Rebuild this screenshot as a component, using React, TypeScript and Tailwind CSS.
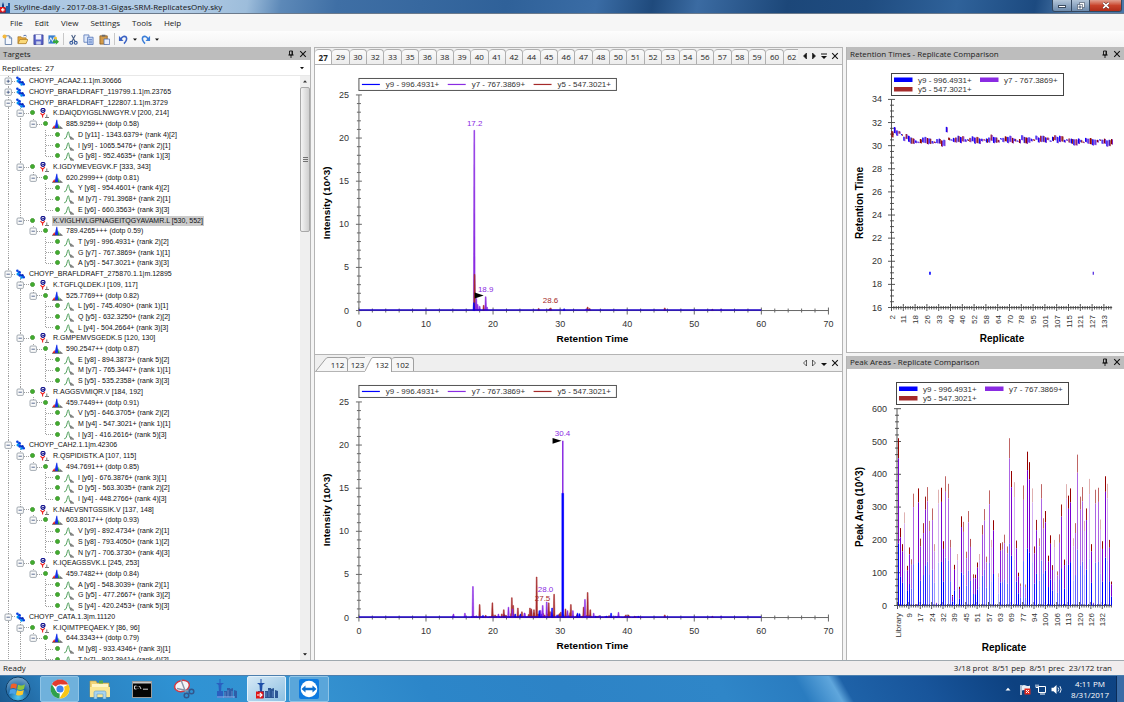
import { useState } from "react";
import type { ReactNode } from "react";
import clsx from "clsx";

const BLUE = "#0000ff";
const PURPLE = "#8a2be2";
const BROWN = "#a52a2a";

type Peptide = { seq: string; precursor: string; transitions: string[] };
type Protein = { name: string; peptides: Peptide[]; more?: boolean };

const proteins: Protein[] = [
  { name: "CHOYP_ACAA2.1.1|m.30666", peptides: [] },
  { name: "CHOYP_BRAFLDRAFT_119799.1.1|m.23765", peptides: [] },
  {
    name: "CHOYP_BRAFLDRAFT_122807.1.1|m.3729",
    peptides: [
      {
        seq: "K.DAIQDYIGSLNWGYR.V [200, 214]",
        precursor: "885.9259++ (dotp 0.58)",
        transitions: ["D [y11] - 1343.6379+ (rank 4)[2]", "I [y9] - 1065.5476+ (rank 2)[1]", "G [y8] - 952.4635+ (rank 1)[3]"],
      },
      {
        seq: "K.IGDYMEVEGVK.F [333, 343]",
        precursor: "620.2999++ (dotp 0.81)",
        transitions: ["Y [y8] - 954.4601+ (rank 4)[2]", "M [y7] - 791.3968+ (rank 2)[1]", "E [y6] - 660.3563+ (rank 3)[3]"],
      },
      {
        seq: "K.VIGLHVLGPNAGEITQGYAVAMR.L [530, 552]",
        precursor: "789.4265+++ (dotp 0.59)",
        transitions: ["T [y9] - 996.4931+ (rank 2)[2]", "G [y7] - 767.3869+ (rank 1)[1]", "A [y5] - 547.3021+ (rank 3)[3]"],
      },
    ],
  },
  {
    name: "CHOYP_BRAFLDRAFT_275870.1.1|m.12895",
    peptides: [
      {
        seq: "K.TGFLQLDEK.I [109, 117]",
        precursor: "525.7769++ (dotp 0.82)",
        transitions: ["L [y6] - 745.4090+ (rank 1)[1]", "Q [y5] - 632.3250+ (rank 2)[2]", "L [y4] - 504.2664+ (rank 3)[3]"],
      },
      {
        seq: "R.GMPEMVSGEDK.S [120, 130]",
        precursor: "590.2547++ (dotp 0.87)",
        transitions: ["E [y8] - 894.3873+ (rank 5)[2]", "M [y7] - 765.3447+ (rank 1)[1]", "S [y5] - 535.2358+ (rank 3)[3]"],
      },
      {
        seq: "R.AGGSVMIQR.V [184, 192]",
        precursor: "459.7449++ (dotp 0.91)",
        transitions: ["V [y5] - 646.3705+ (rank 2)[2]", "M [y4] - 547.3021+ (rank 1)[1]", "I [y3] - 416.2616+ (rank 5)[3]"],
      },
    ],
  },
  {
    name: "CHOYP_CAH2.1.1|m.42306",
    peptides: [
      {
        seq: "R.QSPIDISTK.A [107, 115]",
        precursor: "494.7691++ (dotp 0.85)",
        transitions: ["I [y6] - 676.3876+ (rank 3)[1]", "D [y5] - 563.3035+ (rank 2)[2]", "I [y4] - 448.2766+ (rank 4)[3]"],
      },
      {
        seq: "K.NAEVSNTGSSIK.V [137, 148]",
        precursor: "603.8017++ (dotp 0.93)",
        transitions: ["V [y9] - 892.4734+ (rank 2)[1]", "S [y8] - 793.4050+ (rank 1)[2]", "N [y7] - 706.3730+ (rank 4)[3]"],
      },
      {
        seq: "K.IQEAGSSVK.L [245, 253]",
        precursor: "459.7482++ (dotp 0.84)",
        transitions: ["A [y6] - 548.3039+ (rank 2)[1]", "G [y5] - 477.2667+ (rank 3)[2]", "S [y4] - 420.2453+ (rank 5)[3]"],
      },
    ],
  },
  {
    name: "CHOYP_CATA.1.3|m.11120",
    more: true,
    peptides: [
      {
        seq: "K.IQIMTPEQAEK.Y [86, 96]",
        precursor: "644.3343++ (dotp 0.79)",
        transitions: ["M [y8] - 933.4346+ (rank 3)[1]", "T [y7] - 802.3941+ (rank 4)[2]"],
      },
    ],
  },
];

type Row = { level: number; label: string; expanded: boolean; last: boolean; siblings: boolean };

const rows: Row[] = proteins.flatMap((protein) => [
  { level: 0, label: protein.name, expanded: protein.peptides.length > 0, last: false, siblings: false },
  ...protein.peptides.flatMap((pep, i) => {
    const last = i === protein.peptides.length - 1 && !protein.more;
    return [
      { level: 1, label: pep.seq, expanded: true, last, siblings: !last },
      { level: 2, label: pep.precursor, expanded: true, last: true, siblings: !last },
      ...pep.transitions.map((label, t) => ({
        level: 3,
        label,
        expanded: false,
        last: t === pep.transitions.length - 1 && !protein.more,
        siblings: !last,
      })),
    ];
  }),
]);

const rowPadding = ["pl-[4px]", "pl-[16px]", "pl-[29px]", "pl-[55px]"];

function TreeLines({ row }: { row: Row }) {
  const line = { stroke: "#a0a0a0", strokeDasharray: "1 1" };
  const { level } = row;
  return (
    <svg className="absolute left-0 top-0 h-full w-[60px] overflow-visible" aria-hidden="true">
      <line x1="8.5" x2="8.5" y1="0" y2="11" {...line} />
      {level === 0 && <line x1="12" x2="16" y1="5.5" y2="5.5" {...line} />}
      {level === 0 && row.expanded && <line x1="20.5" x2="20.5" y1="9" y2="11" {...line} />}
      {level > 0 && (level === 1 || row.siblings) && (
        <line x1="20.5" x2="20.5" y1="0" y2={level === 1 && row.last ? 5 : 11} {...line} />
      )}
      {level === 1 && <line x1="24" x2="29" y1="5.5" y2="5.5" {...line} />}
      {level === 2 && <line x1="33.5" x2="33.5" y1="0" y2="5" {...line} />}
      {level === 2 && <line x1="37" x2="42" y1="5.5" y2="5.5" {...line} />}
      {level === 3 && <line x1="45.5" x2="45.5" y1="0" y2={row.last ? 5 : 11} {...line} />}
      {level === 3 && <line x1="46" x2="54" y1="5.5" y2="5.5" {...line} />}
    </svg>
  );
}

function Expander({ expanded, label }: { expanded: boolean; label: string }) {
  return (
    <button type="button" aria-label={`Toggle ${label}`} className="relative size-2 shrink-0">
      <svg viewBox="0 0 8 8" className="size-2">
        <rect x="1" y="1" width="6.4" height="6.4" rx="1" fill="#fbfbfb" stroke="#8c96a0" strokeWidth=".8" />
        <path d={expanded ? "M2.5 4.2h3.4" : "M2.5 4.2h3.4M4.2 2.5v3.4"} stroke="#334a78" strokeWidth=".8" />
      </svg>
    </button>
  );
}

function NodeIcon({ level }: { level: number }) {
  return (
    <svg viewBox="0 0 11 10" className="relative ml-[3px] h-[10px] w-[11px] shrink-0">
      {level === 0 && (
        <g fill="#0a3fe0">
          <circle cx="2.4" cy="1.8" r="1.3" />
          <circle cx="4.4" cy="3.2" r="1.5" />
          <circle cx="3" cy="5" r="1.5" fill="#0092f0" />
          <circle cx="5" cy="6.2" r="1.6" />
          <circle cx="7.4" cy="6.6" r="1.5" fill="#0a28b8" />
          <circle cx="6.6" cy="8.4" r="1.3" fill="#0092f0" />
          <circle cx="8.8" cy="8.2" r="1.2" />
        </g>
      )}
      {level === 1 && (
        <g fill="none">
          <circle cx="4" cy="2.3" r="2" fill="#fff" stroke="#10108c" strokeWidth="1.2" />
          <path d="M3.2 2.4h2.4" stroke="#10108c" />
          <path d="M1.5 5.2 3.6 7.3M5.8 5.2 3.6 7.3V9.6" stroke="#ee2020" strokeWidth="1.1" />
          <path d="M6 9.5H7.8V6.5M7.8 9.5H10" stroke="#666" strokeWidth=".9" />
        </g>
      )}
      {level === 2 && (
        <g>
          <path d="M2.6 9.2 4.4.8h.8l1.200 8.400z" fill="#1430e8" />
          <path d="M.3 9.200 2.400 6l1 3.200z" fill="#e02020" />
          <path d="M5.800 9.200 6.800 4.600l1 4.600z" fill="#1b9a2b" />
          <path d="M7.800 9.300V6.800l2.800 2.500z" fill="#777" />
          <path d="M0 9.400h10.600" stroke="#555" strokeWidth=".7" />
        </g>
      )}
      {level === 3 && (
        <g fill="none">
          <path d="M.2 8.8C2.4 8.8 2.6 6 3.4 3.4 4 1 4.6 1.4 5 3.6c.4 2.4.6 4.4 2 4.8" stroke="#3b9348" strokeWidth=".9" />
          <path d="M6.600 9.200V6.600L9.800 9.200z" fill="#999" stroke="#666" strokeWidth=".7" />
        </g>
      )}
    </svg>
  );
}

function TreeRow({ row, selected }: { row: Row; selected: boolean }) {
  return (
    <li className={clsx("relative flex min-h-0 items-center", rowPadding[row.level])}>
      <TreeLines row={row} />
      {row.level < 3 && <Expander expanded={row.expanded} label={row.label} />}
      {row.level > 0 && (
        <span className={clsx("relative flex size-[6px] shrink-0", row.level < 3 && "ml-[6px]")}>
          <span className="size-[5px] rounded-full border border-[#4a9a3a] bg-[#3fae2c]" />
        </span>
      )}
      <NodeIcon level={row.level} />
      <span
        className={clsx(
          "ml-[2px] whitespace-pre px-px font-['Liberation_Sans',Arial,sans-serif] text-[7px] leading-[10px] text-[#111]",
          selected && "bg-[#cbcbcb]",
        )}
      >
        {row.label}
      </span>
    </li>
  );
}

function PinIcon() {
  return (
    <svg viewBox="0 0 8 8" className="size-2" fill="none" stroke="#111" strokeWidth=".9">
      <path d="M2.5 1h3v4h-3zM1.3 5h5.4M4 5v3M5 1v4" />
    </svg>
  );
}

function CloseIcon() {
  return (
    <svg viewBox="0 0 8 8" className="size-2" stroke="#111" strokeWidth="1.1">
      <path d="M1.2 1.2 6.8 6.8M6.8 1.2 1.2 6.8" />
    </svg>
  );
}

function PanelHeader({ title }: { title: string }) {
  return (
    <header className="flex h-[13px] shrink-0 items-center bg-[#bdbdbd] pl-[3px] pr-[3px]">
      <h2 className="flex-1 whitespace-nowrap text-[8px] leading-[12px] text-[#1c1c1c]">{title}</h2>
      <button type="button" aria-label="Auto hide">
        <PinIcon />
      </button>
      <button type="button" aria-label="Close" className="ml-1">
        <CloseIcon />
      </button>
    </header>
  );
}

function TargetsPanel() {
  return (
    <section className="flex min-h-0 flex-col border-r border-[#b4b4b4] bg-white">
      <PanelHeader title="Targets" />
      <div className="flex h-[15px] shrink-0 items-center pl-[2px] text-[8px]">
        <label htmlFor="replicates">Replicates:</label>
        <select id="replicates" defaultValue="27" className="ml-[3px] flex-1 appearance-none bg-transparent leading-[12px]">
          <option>27</option>
          <option>29</option>
          <option>30</option>
        </select>
        <svg viewBox="0 0 6 4" className="mr-[5px] h-1 w-[6px]">
          <path d="M1 1h4L3 3.2z" fill="#111" />
        </svg>
      </div>
      <div className="flex min-h-0 flex-1 overflow-hidden border-t border-[#e8e8e8]">
        <ul className="-mb-[5px] grid flex-1 auto-rows-fr overflow-hidden">
          {rows.map((row) => (
            <TreeRow key={row.label + row.level} row={row} selected={row.label.startsWith("K.VIGL")} />
          ))}
        </ul>
        <div className="flex w-[10px] flex-col items-center bg-[#efefef]">
          <svg viewBox="0 0 10 11" className="h-[11px] w-[10px]">
            <path d="M3 6.5h4L5 4.2z" fill="#333" />
          </svg>
          <div className="flex h-[145px] w-full items-center justify-center rounded-[2px] border border-[#a8a8a8] bg-linear-to-r from-[#f4f4f4] to-[#cfcfcf]">
            <svg viewBox="0 0 5 5" className="size-[5px]" stroke="#555" strokeWidth=".8">
              <path d="M0 .5h5M0 2.5h5M0 4.5h5" />
            </svg>
          </div>
          <svg viewBox="0 0 10 11" className="mt-auto h-[11px] w-[10px]">
            <path d="M3 4.2h4L5 6.5z" fill="#111" />
          </svg>
        </div>
      </div>
    </section>
  );
}

type Peak = [time: number, height: number, color: string];
type Note = { x: number; y: number; text: string; color: string };

const legend = [
  ["y9 - 996.4931+", BLUE],
  ["y7 - 767.3869+", PURPLE],
  ["y5 - 547.3021+", BROWN],
];

const baseNoise: Peak[] = [
  [33.9, 0.2, PURPLE],
  [45.6, 0.3, BROWN],
  [52.7, 0.15, BROWN],
  [54, 0.15, PURPLE],
];

const replicate27: Peak[] = [
  [17.2, 20.9, PURPLE],
  [17.25, 4.2, BROWN],
  [17.15, 0.9, BLUE],
  [17.5, 1.4, PURPLE],
  [17.7, 0.7, PURPLE],
  [18, 0.5, PURPLE],
  [18.6, 0.6, BROWN],
  [18.9, 1.6, PURPLE],
  [19.1, 0.4, PURPLE],
  [26.8, 0.25, BROWN],
  [28.4, 0.2, BROWN],
  [28.6, 0.3, BROWN],
  [30.6, 0.2, BLUE],
  [34.1, 0.4, BROWN],
  [34.4, 0.25, BROWN],
  ...baseNoise,
];

// low background between 16 and 44 minutes
const background: Peak[] = Array.from({ length: 130 }, (_, i) => {
  const time = 16.5 + i * 0.2;
  const envelope = 0.2 + 0.65 * Math.exp(-(((time - 27) / 6) ** 2));
  return [time, envelope * Math.abs(Math.sin(i * 2.7) * Math.cos(i * 1.3)), [BROWN, PURPLE, BLUE, BROWN][i % 4]];
});

const replicate132: Peak[] = [
  ...background,
  [14.1, 0.4, PURPLE],
  [15.8, 0.5, PURPLE],
  [17, 3.6, PURPLE],
  [18, 1.5, BROWN],
  [19.9, 1.7, BROWN],
  [20.8, 0.4, PURPLE],
  [21.6, 0.9, BROWN],
  [22.3, 1.2, PURPLE],
  [22.8, 2.3, BROWN],
  [23, 1.4, BROWN],
  [22.9, 1, PURPLE],
  [23.7, 1.1, BROWN],
  [24.7, 0.5, PURPLE],
  [25.5, 1.1, BROWN],
  [25.7, 1, BROWN],
  [26.1, 0.9, BROWN],
  [26.5, 4.7, BROWN],
  [26.9, 0.8, BLUE],
  [27.4, 1.4, PURPLE],
  [28, 1.8, PURPLE],
  [28.3, 1.7, BROWN],
  [28.8, 1.1, BLUE],
  [29.1, 2.7, BROWN],
  [30.8, 1, BROWN],
  [31.1, 0.8, PURPLE],
  [31.6, 1.5, BROWN],
  [31.9, 0.8, PURPLE],
  [32.6, 0.5, BLUE],
  [33.5, 1.2, BROWN],
  [33.7, 2.1, PURPLE],
  [34.1, 2.9, BROWN],
  [34.5, 0.9, BROWN],
  [35, 0.5, PURPLE],
  [37.6, 0.5, BLUE],
  [38.7, 0.6, PURPLE],
  [39.8, 0.3, BROWN],
  [40.2, 0.3, BROWN],
  ...baseNoise,
];

const chartText = "font-['Liberation_Sans',Arial,sans-serif]";

function range(count: number) {
  return Array.from({ length: count }, (_, i) => i);
}

function Chromatogram({ peaks, notes, marker, children }: { peaks: Peak[]; notes: Note[]; marker: [number, number]; children?: ReactNode }) {
  const x0 = 44;
  const y0 = 246;
  const px = (time: number) => x0 + time * 6.72;
  const py = (value: number) => y0 - value * 8.64;
  return (
    <svg viewBox="0 0 528 288" preserveAspectRatio="xMidYMin" className={clsx("size-full", chartText)}>
      <rect x="44" y="13.5" width="258" height="12" fill="#fff" stroke="#555" />
      {legend.map(([label, color], i) => (
        <g key={label}>
          <path d={`M${47 + i * 86} 19.5h18`} stroke={color} strokeWidth="1.2" />
          <text x={71 + i * 86} y="22.5" fontSize="8" fill="#333">
            {label}
          </text>
        </g>
      ))}
      <g stroke="#666">
        <path d={`M${x0} ${py(25)}V${y0}H${px(70)}`} fill="none" />
        {range(26).map((v) => (
          <path key={v} d={v % 5 ? `M${x0 - 2} ${py(v)}h4` : `M${x0 - 3} ${py(v)}h6`} />
        ))}
        {range(36).map((v) => (
          <path key={v} d={v % 5 ? `M${px(v * 2)} ${y0 - 2}v4` : `M${px(v * 2)} ${y0 - 3}v7`} />
        ))}
      </g>
      <g fontSize="9" fill="#333">
        {range(6).map((v) => (
          <text key={v} x="34" y={py(v * 5) + 3} textAnchor="end">
            {v * 5}
          </text>
        ))}
        {range(8).map((v) => (
          <text key={v} x={px(v * 10)} y={y0 + 16} textAnchor="middle">
            {v * 10}
          </text>
        ))}
      </g>
      {peaks.map(([time, height, color], i) => (
        <path
          key={i}
          d={`M${px(time) - 0.9} ${y0}L${px(time) - 0.4} ${py(height)}h.8L${px(time) + 0.9} ${y0}z`}
          fill={color}
          stroke={color}
          strokeWidth=".5"
        />
      ))}
      {children}
      <path d={`M${x0} ${y0 - 0.5}H${px(60)}`} stroke="#1c00c8" strokeWidth="1.4" />
      <path d={`M${marker[0]} ${marker[1] - 3}l9 3-9 3z`} fill="#000" />
      {notes.map((note) => (
        <text key={note.text} x={note.x} y={note.y} fontSize="8" fill={note.color} textAnchor="middle">
          {note.text}
        </text>
      ))}
      <g fontSize="10" fontWeight="bold" fill="#000" textAnchor="middle">
        <text x="278" y="278">
          Retention Time
        </text>
        <text transform="translate(15 138) rotate(-90)">Intensity (10^3)</text>
      </g>
    </svg>
  );
}

const topTabs = [27, 29, 30, 32, 33, 35, 36, 38, 39, 40, 41, 42, 44, 45, 46, 47, 48, 50, 51, 52, 53, 54, 56, 57, 58, 59, 60, 62];

function StripControls({ solid }: { solid?: boolean }) {
  const fill = solid ? "#111" : "none";
  return (
    <div className="flex w-11 shrink-0 items-center justify-between pl-1 pr-[3px]">
      <button type="button" aria-label="Scroll tabs left">
        <svg viewBox="0 0 6 8" className="h-2 w-[6px]">
          <path d="M4.5 1v6L1.5 4z" fill={fill} stroke="#222" strokeWidth=".7" />
        </svg>
      </button>
      <button type="button" aria-label="Scroll tabs right">
        <svg viewBox="0 0 6 8" className="h-2 w-[6px]">
          <path d="M1.5 1v6l3-3z" fill={fill} stroke="#222" strokeWidth=".7" />
        </svg>
      </button>
      <button type="button" aria-label="Window list">
        <svg viewBox="0 0 8 8" className="size-2">
          {solid && <path d="M1 2h6" stroke="#111" />}
          <path d="M1 4h6L4 7z" fill="#111" />
        </svg>
      </button>
      <button type="button" aria-label="Close window">
        <CloseIcon />
      </button>
    </div>
  );
}

function GraphArea() {
  const [active, setActive] = useState(27);
  return (
    <section className="flex min-w-0 flex-col border-x border-[#b4b4b4] bg-white">
      <div className="flex h-[18px] shrink-0 items-stretch border-b border-t border-[#b4b4b4] bg-[#efefef]">
        <div className="flex min-w-0 flex-1 overflow-hidden pt-px">
          <div className="-mr-[3px] grid flex-1 auto-cols-fr grid-flow-col" role="tablist">
            {topTabs.map((tab) => (
              <button
                key={tab}
                type="button"
                role="tab"
                aria-selected={tab === active}
                onClick={() => setActive(tab)}
                className={clsx(
                  "overflow-hidden rounded-t-[4px] border-r border-t border-[#b0b0b0] text-[8px] leading-[14px] text-[#222]",
                  tab === active ? "-mb-px bg-white font-bold" : "bg-linear-to-b from-[#fafafa] to-[#ececec]",
                )}
              >
                {tab}
              </button>
            ))}
          </div>
        </div>
        <StripControls solid />
      </div>
      <div className="min-h-0 flex-1">
        <Chromatogram
          peaks={replicate27}
          marker={[160, 231]}
          notes={[
            { x: 160, y: 61, text: "17.2", color: PURPLE },
            { x: 171, y: 227, text: "18.9", color: PURPLE },
            { x: 236, y: 238, text: "28.6", color: BROWN },
          ]}
        />
      </div>
      <div className="flex h-[18px] shrink-0 items-stretch border-b border-t border-[#b4b4b4] bg-[#efefef]">
        <div className="flex flex-1 items-stretch pt-[2px] text-[8px] leading-[14px] text-[#222]" role="tablist">
          <svg viewBox="0 0 13 14" className="h-[14px] w-[13px]">
            <path d="M1 14 11 1.5l2-1.2V14z" fill="#f6f6f6" />
            <path d="M1 14 10.5 2Q11.500.5 13 .5" fill="none" stroke="#a0a0a0" />
          </svg>
          <button type="button" role="tab" className="w-5 rounded-tr-[3px] border-r border-t border-[#a0a0a0] bg-[#f6f6f6] leading-[13px]">
            112
          </button>
          <button type="button" role="tab" className="w-[17px] rounded-tl-[4px] border-t border-[#a0a0a0] bg-[#f6f6f6] pl-[2px] leading-[13px]">
            123
          </button>
          <svg viewBox="0 0 8 15" className="-mb-px h-[15px] w-2 bg-[#f6f6f6]">
            <path d="M0 15 6 2 8 .5V15z" fill="#fff" />
            <path d="M0 14 5.5 3Q6.500.5 8 .5" fill="none" stroke="#a0a0a0" />
          </svg>
          <button type="button" role="tab" aria-selected className="-mb-px w-[19px] rounded-tr-[3px] border-r border-t border-[#a0a0a0] bg-white">
            132
          </button>
          <button type="button" role="tab" className="w-[22px] rounded-t-[3px] border-r border-t border-[#a0a0a0] bg-[#f6f6f6] leading-[13px]">
            102
          </button>
        </div>
        <StripControls />
      </div>
      <div className="min-h-0 flex-1">
        <Chromatogram
          peaks={replicate132}
          marker={[238, 69]}
          notes={[
            { x: 248, y: 64, text: "30.4", color: PURPLE },
            { x: 231, y: 220, text: "28.0", color: PURPLE },
            { x: 228, y: 229, text: "27.5", color: BROWN },
          ]}
        >
          <path d="M247.500 246V69h1.500V246z" fill={PURPLE} />
          <path d="M247.200 246V121.500h2V246z" fill={BLUE} stroke={BLUE} strokeWidth=".3" />
        </Chromatogram>
      </div>
    </section>
  );
}

function BarLegend({ x }: { x: number }) {
  const cells = [
    [x + 3, 17.5],
    [x + 89, 17.5],
    [x + 3, 27],
  ];
  return (
    <g>
      <rect x={x + 0.5} y="13.5" width="172" height="22" fill="#fff" stroke="#444" />
      {legend.map(([label, color], i) => (
        <g key={label}>
          <rect x={cells[i][0]} y={cells[i][1]} width="18.500" height="4.500" fill={color} />
          <text x={cells[i][0] + 24} y={cells[i][1] + 5} fontSize="8" fill="#333">
            {label}
          </text>
        </g>
      ))}
    </g>
  );
}

const rtLabels = "2 11 18 26 33 40 46 52 58 64 70 78 95 101 107 115 121 127 133".split(" ");
const retentionTimes = [
  31, 31.35, 31.1, 31.15, 30.95, 30.6, 30.8, 30.6, 30.45, 30.4, 30.35, 30.3, 30.4, 30.5, 30.5, 30.4, 30.4, 30.3, 30.3, 30.4,
  30.4, 30.2, 30.25, 31.4, 30.6, 30.5, 30.5, 30.5, 30.6, 30.5, 30.6, 30.45, 30.5, 30.5, 30.6, 30.45, 30.5, 30.4, 30.5, 30.5,
  30.45, 30.5, 30.7, 30.5, 30.5, 30.4, 30.6, 30.5, 30.6, 30.5, 30.6, 30.45, 30.5, 30.4, 30.4, 30.7, 30.5, 30.45, 30.5, 30.5,
  30.5, 30.7, 30.5, 30.6, 30.6, 30.5, 30.6, 30.4, 30.6, 30.7, 30.5, 30.6, 30.6, 30.4, 30.5, 30.45, 30.4, 30.3, 30.3, 30.4,
  30.4, 30.3, 30.5, 30.4, 30.4, 30.3, 30.3, 30.4, 30.5, 30.35, 30.4, 30.2, 30.25, 30.35,
];

function RetentionTimesChart() {
  const px = (i: number) => 44.5 + i * 2.36;
  const py = (value: number) => 247.5 - (value - 16) * 11.56;
  return (
    <svg viewBox="0 0 277 291" preserveAspectRatio="xMidYMin" className={clsx("size-full", chartText)}>
      <BarLegend x={44} />
      <g stroke="#444" strokeWidth=".9">
        <path d={`M44.500 ${py(34)}V${py(16)}H${px(93.5)}`} fill="none" />
        {range(37).map((v) => (
          <path key={v} d={v % 4 ? `M43 ${py(16 + v / 2)}h4` : `M41 ${py(16 + v / 2)}h7`} />
        ))}
        {range(94).map((i) => (
          <path key={i} d={i % 5 ? `M${px(i)} 246v3.500` : `M${px(i)} 244v7`} />
        ))}
      </g>
      <g fontSize="9" fill="#333" textAnchor="end">
        {range(10).map((v) => (
          <text key={v} x="35" y={py(16 + v * 2) + 3}>
            {16 + v * 2}
          </text>
        ))}
      </g>
      <g fontSize="8" fill="#333" textAnchor="end">
        {rtLabels.map((label, i) => (
          <text key={label} transform={`translate(${px(i * 5) + 3} 255) rotate(-90)`}>
            {label}
          </text>
        ))}
      </g>
      {retentionTimes.map((value, i) => {
        const half = [3, 2, 1.2, 3, 2.4, 0.6, 2.6][(i * 3) % 7];
        return (
          <g key={i}>
            <rect x={px(i)} y={py(value) - half} width="1.200" height={half * 2} fill={i % 3 ? BLUE : "#8b0000"} />
            <rect x={px(i) + 1} y={py(value) - half + 0.4} width="1" height={half * 2} fill={i % 4 ? "#7a22c8" : "#8b0000"} />
          </g>
        );
      })}
      <path d={`M${px(16.3)} ${py(19.1)}v3`} stroke={BLUE} strokeWidth="1.600" />
      <path d={`M${px(85.5)} ${py(19.1)}v3`} stroke="#4a20e0" strokeWidth="1.200" />
      <g fontSize="10" fontWeight="bold" textAnchor="middle">
        <text x="155" y="282">
          Replicate
        </text>
        <text transform="translate(16 143) rotate(-90)">Retention Time</text>
      </g>
    </svg>
  );
}

const areaLabels = "Library 9 17 24 32 39 45 51 57 63 69 77 94 100 106 113 120 126 132".split(" ");
// total area (10^3) and how solid the bar is drawn
const areas: [number, number][] = [
  [510, 1], [236, 1], [187, 1], [284, 0.3], [121, 1], [177, 0.9], [141, 0.6], [341, 0.6], [4, 0.9], [357, 1],
  [204, 0.8], [251, 0.8], [332, 0.9], [361, 0.6], [258, 0.5], [296, 0.6], [187, 0.4], [8, 0.9], [353, 0.3], [359, 1],
  [196, 1], [394, 0.6], [371, 0.6], [200, 0.6], [32, 1], [124, 1], [157, 0.3], [57, 1], [272, 1], [255, 0.6],
  [164, 0.6], [288, 0.6], [203, 0.7], [95, 0.8], [94, 1], [131, 1], [157, 0.3], [245, 0.7], [294, 0.6], [149, 0.6],
  [351, 0.6], [200, 0.3], [260, 1], [3, 0.5], [98, 0.3], [190, 0.9], [193, 0.6], [216, 0.6], [180, 0.6], [510, 0.6],
  [410, 1], [376, 0.3], [198, 0.9], [100, 1], [67, 0.6], [366, 0.6], [64, 0.5], [469, 1], [437, 1], [357, 0.3],
  [180, 0.9], [261, 0.9], [205, 0.5], [370, 0.6], [266, 0.6], [288, 1], [152, 1], [214, 1], [123, 0.9], [200, 0.3],
  [104, 0.6], [217, 0.6], [308, 0.9], [140, 1], [370, 0.3], [335, 1], [357, 1], [205, 0.3], [251, 0.6], [460, 0.6],
  [332, 0.6], [361, 0.6], [258, 0.3], [296, 0.9], [386, 0.3], [187, 1], [8, 0.9], [353, 0.6], [359, 0.6], [262, 0.3],
  [196, 1], [394, 1], [371, 0.3], [200, 0.9], [73, 1],
];

function PeakAreasChart() {
  const px = (i: number) => 50.5 + i * 2.275;
  const py = (value: number) => 236.5 - value * 0.328;
  return (
    <svg viewBox="0 0 277 291" preserveAspectRatio="xMidYMin" className={clsx("size-full", chartText)}>
      <BarLegend x={49} />
      <g stroke="#444" strokeWidth=".9">
        <path d={`M50 ${py(600)}V${py(0)}H${px(94)}`} fill="none" />
        {range(31).map((v) => (
          <path key={v} d={v % 5 ? `M48 ${py(v * 20)}h4` : `M47 ${py(v * 20)}h7`} />
        ))}
        {range(95).map((i) => (
          <path key={i} d={i % 5 ? `M${px(i)} 235v3.500` : `M${px(i)} 233v7`} />
        ))}
      </g>
      {areas.map(([value, opacity], i) => {
        const x = Math.round(px(i));
        return (
          <g key={i} opacity={opacity}>
            <rect x={x} y={py(value)} width="1" height={value * 0.12 * 0.328} fill="#960000" />
            <rect x={x} y={py(value * 0.88)} width="1" height={value * 0.51 * 0.328} fill="#7800d2" />
            <rect x={x} y={py(value * 0.37)} width="1" height={value * 0.37 * 0.328} fill={BLUE} />
          </g>
        );
      })}
      <g fontSize="9" fill="#333" textAnchor="end">
        {range(7).map((v) => (
          <text key={v} x="40" y={py(v * 100) + 3}>
            {v * 100}
          </text>
        ))}
      </g>
      <g fontSize="8" fill="#333" textAnchor="end">
        {areaLabels.map((label, i) => (
          <text key={label} transform={`translate(${px(i * 5) + 3} 244) rotate(-90)`}>
            {label}
          </text>
        ))}
      </g>
      <g fontSize="10" fontWeight="bold" textAnchor="middle">
        <text x="157" y="282">
          Replicate
        </text>
        <text transform="translate(16 138) rotate(-90)">Peak Area (10^3)</text>
      </g>
    </svg>
  );
}

function TitleBar() {
  return (
    <header className="flex h-[14px] shrink-0 items-center border-b border-[#6b7a8c] bg-[linear-gradient(100deg,#a9c6e2_0%,#b4cde6_16%,#9dbddb_22%,#5d89b8_25%,#3f6fa5_30%,#2f6199_45%,#3a6ca5_53%,#1f4a7c_58%,#3b6ba2_62%,#1c4779_70%,#1f4c80_77%,#2f629a_85%,#1c4a80_92%,#5b86b5_96%,#4a77a8_100%)]">
      <svg viewBox="0 0 11 12" className="h-3 w-[11px]">
        <path d="M0 12V8h2V4l1-3 1 3v3h2v5z" fill="#123f88" />
        <path d="M6 12V5h2V2h2v10z" fill="#1f5fa8" />
        <rect y="6" width="5.500" height="5.500" fill="#e01818" />
        <path d="M1 8.800h3.500M2.800 7v3.600" stroke="#fff" strokeWidth="1.200" />
      </svg>
      <h1 className="ml-[3px] flex-1 whitespace-nowrap text-[8px] leading-[13px] text-[#111]">
        Skyline-daily - 2017-08-31-Gigas-SRM-ReplicatesOnly.sky
      </h1>
      <div className="mr-[2px] flex h-3 self-start overflow-hidden rounded-b-[3px] border-x border-b border-[#33475f]">
        <button type="button" aria-label="Minimize" className="flex w-[19px] items-end justify-center border-r border-[#33475f] bg-linear-to-b from-[#b3c5d8] to-[#6d8bad] pb-[3px]">
          <span className="h-[3px] w-2 border border-[#3c4c60] bg-white" />
        </button>
        <button type="button" aria-label="Restore" className="flex w-[18px] items-center justify-center border-r border-[#33475f] bg-linear-to-b from-[#b3c5d8] to-[#6d8bad]">
          <svg viewBox="0 0 8 8" className="size-2" fill="#a9bbd0" stroke="#3c4c60" strokeWidth=".6">
            <path d="M2.500.5h5v5h-5z" fill="#fff" />
            <path d="M.5 2.500h5v5h-5z" fill="#fff" />
            <path d="M2 4h2v2H2z" />
          </svg>
        </button>
        <button type="button" aria-label="Close" className="flex w-[31px] items-center justify-center bg-linear-to-b from-[#e0a090] via-[#c8432b] to-[#b02c18]">
          <svg viewBox="0 0 8 7" className="h-[7px] w-2">
            <path d="M1.200.8 6.800 6.200M6.800.8 1.200 6.200" stroke="#5b2a24" strokeWidth="2.600" />
            <path d="M1.200.8 6.800 6.200M6.800.8 1.200 6.200" stroke="#fff" strokeWidth="1.600" />
          </svg>
        </button>
      </div>
    </header>
  );
}

function ToolButton({ label, children, className }: { label: string; children: ReactNode; className?: string }) {
  return (
    <button type="button" aria-label={label} className={className}>
      <svg viewBox="0 0 12 12" className="size-[11px]" fill="none">
        {children}
      </svg>
    </button>
  );
}

function Caret() {
  return (
    <svg viewBox="0 0 4 3" className="ml-1 h-[3px] w-1">
      <path d="M0 .5h4L2 2.800z" fill="#111" />
    </svg>
  );
}

function Toolbar() {
  return (
    <div className="flex h-4 shrink-0 items-center bg-linear-to-b from-[#fdfdfd] to-[#f3f3f3] pl-[2px]">
      <ToolButton label="New">
        <path d="M3.500 2h4.500l2.500 2.500v7h-7z" fill="#f4f8ff" stroke="#52719e" strokeWidth=".9" />
        <path d="M8 2v2.500h2.500" stroke="#52719e" strokeWidth=".8" />
        <circle cx="2.800" cy="2.800" r="2.200" fill="#f5b93c" />
      </ToolButton>
      <ToolButton label="Open" className="ml-1">
        <path d="M1 10V3h3.500l1 1.200H10V10z" fill="#e6a93a" stroke="#a57420" strokeWidth=".7" />
        <path d="M1 10.500 3.200 6H12l-2.200 4.500z" fill="#fbd978" stroke="#a57420" strokeWidth=".7" />
        <path d="M7 2q2-1.600 3.500.4" stroke="#4466a8" />
      </ToolButton>
      <ToolButton label="Save" className="ml-[5px]">
        <path d="M1 1h10v10.500H1z" fill="#5a63c8" stroke="#353c92" strokeWidth=".8" />
        <path d="M3 1h6v5H3z" fill="#f0f2ff" />
        <path d="M3.500 8h5v3.500h-5z" fill="#c9d0ea" />
      </ToolButton>
      <ToolButton label="Import results" className="ml-1">
        <path d="M.5 1.500h7.500v9H.5z" fill="#3a7fce" />
        <path d="M1 9 3 4l2 4 2-5" stroke="#fff" />
        <circle cx="8.200" cy="4.500" r="1.600" fill="#f0c238" />
        <path d="M5.500 7h3V5.200L12 8.400 8.500 11.600V9.800h-3z" fill="#35a83a" />
      </ToolButton>
      <span className="ml-1 h-3 w-px bg-[#c8c8c8]" />
      <ToolButton label="Cut" className="ml-1">
        <path d="M4 1 7.500 8M8 1 4.500 8" stroke="#4a5f86" strokeWidth="1.200" />
        <circle cx="3.600" cy="9.600" r="1.600" stroke="#34599c" strokeWidth="1.200" />
        <circle cx="8.400" cy="9.600" r="1.600" stroke="#34599c" strokeWidth="1.200" />
      </ToolButton>
      <ToolButton label="Copy" className="ml-1">
        <path d="M1 1h5.500v8H1z" fill="#dfe9fb" stroke="#4a6cb0" strokeWidth=".8" />
        <path d="M5 3.500h6v8H5z" fill="#c3d6f8" stroke="#4a6cb0" strokeWidth=".8" />
        <path d="M6.200 6h3.600M6.200 7.800h3.600M6.200 9.600h3.600" stroke="#4a6cb0" strokeWidth=".7" />
      </ToolButton>
      <ToolButton label="Paste" className="ml-[5px]">
        <path d="M1 2h8v9H1z" fill="#d39a48" stroke="#815418" strokeWidth=".8" />
        <path d="M3 .8h4v2H3z" fill="#6c6c6c" />
        <path d="M5.500 5.500h6v6h-6z" fill="#e8efff" stroke="#4a6cb0" strokeWidth=".8" />
      </ToolButton>
      <span className="ml-1 h-3 w-px bg-[#c8c8c8]" />
      <ToolButton label="Undo" className="ml-[3px]">
        <path d="M3 5.500Q6 1 9 3.500 10.500 6.500 6.500 10.500" stroke="#3b62c4" strokeWidth="1.700" />
        <path d="M1 2v5.500h5z" fill="#3b62c4" />
      </ToolButton>
      <Caret />
      <ToolButton label="Redo" className="ml-[3px]">
        <path d="M9 5.500Q6 1 3 3.500 1.500 6.500 5.500 10.500" stroke="#3b7ed8" strokeWidth="1.700" />
        <path d="M11 2v5.500H6z" fill="#3b7ed8" />
      </ToolButton>
      <Caret />
    </div>
  );
}

function SkylineLogo({ pale }: { pale?: boolean }) {
  return (
    <svg viewBox="0 0 22 20" className="h-5 w-[22px]">
      <path d="M1 4h8L6.500 6 6 13h-2L3.500 6zM4.500 0h1v4h-1zM2 12h6v7H2z" fill={pale ? "#2a5fc0" : "#1d4ea6"} />
      <path d="M9 12h3V9h3v10H9zM15 10l3-1v10h-3zM19 11l3 1v7h-3z" fill={pale ? "#2f5da8" : "#2b5594"} />
      <path d="M10 13v5M13 11v7M17 12v6" stroke="#7fa6dc" strokeWidth=".6" />
      {pale ? (
        <path d="M2 18h18" stroke="#8fb6ee" />
      ) : (
        <>
          <rect y="12.500" width="7.500" height="7" fill="#e01616" />
          <path d="M1 16h4.500M3.800 13.800 6 16l-2.200 2.200" stroke="#fff" strokeWidth="1.200" fill="none" />
        </>
      )}
    </svg>
  );
}

function Taskbar() {
  return (
    <footer className="flex h-[27px] shrink-0 items-stretch border-t border-[#4d7fae] bg-[linear-gradient(60deg,#1b5a90_0%,#2a7dbb_5%,#2f93d4_17%,#3592d0_28%,#2c86c9_38%,#2d83c6_50%,#2f86c8_64%,#2a7cc0_71%,#5fa6dc_74%,#1e62a8_75%,#18559b_82%,#0d4180_90%,#0e4484_100%)] text-white">
      <button type="button" aria-label="Start" className="ml-1 flex w-7 items-center justify-center">
        <svg viewBox="0 0 26 26" className="size-[26px]">
          <defs>
            <radialGradient id="orb" cx=".5" cy=".85" r=".85">
              <stop offset="0" stopColor="#4fc8f0" />
              <stop offset=".5" stopColor="#1f6aa8" />
              <stop offset="1" stopColor="#7fa8c8" />
            </radialGradient>
          </defs>
          <circle cx="13" cy="13" r="12" fill="url(#orb)" stroke="#0f3f68" />
          <path d="M6 8.500Q9 6.500 12 8.500L11.200 13Q8.500 11.300 5.300 12.800z" fill="#f0602a" />
          <path d="M13 8.800Q16.500 10.500 20 8.300L19 13Q15.500 14.800 12.200 13.200z" fill="#8cc63e" />
          <path d="M5 13.800Q8.300 12.200 11 14l-.9 4.500Q7.300 16.800 4.200 18.300z" fill="#4aa3e8" />
          <path d="M12 14.200Q15.300 15.800 18.800 14l-1 4.500Q14.300 20.500 11 18.700z" fill="#fcc92f" />
        </svg>
      </button>
      <button type="button" aria-label="Chrome" className="ml-2 flex w-[39px] items-center justify-center rounded-[2px] border border-[#8fc4e6] bg-[#6fb1dc]">
        <svg viewBox="0 0 20 20" className="size-5">
          <circle cx="10" cy="10" r="9.500" fill="#fff" />
          <path d="M10 10 1.800 5.200A9.500 9.500 0 0 1 18.300 5.500H10z" fill="#e33b2e" />
          <path d="M10 10 18.300 5.500A9.500 9.500 0 0 1 9.500 19.500L14 12z" fill="#fbc616" />
          <path d="M10 10 9.500 19.500A9.500 9.500 0 0 1 1.800 5.200L6 12z" fill="#2fa04c" />
          <circle cx="10" cy="10" r="4.600" fill="#fff" />
          <circle cx="10" cy="10" r="3.600" fill="#3f80ee" />
        </svg>
      </button>
      <button type="button" aria-label="Explorer" className="flex w-[42px] items-center justify-center">
        <svg viewBox="0 0 22 20" className="h-5 w-[22px]">
          <path d="M1 18V2h6l1 2h12v14z" fill="#f0d478" stroke="#c49c3c" strokeWidth=".6" />
          <path d="M3 5h16v5H3z" fill="#fff6c8" />
          <path d="M10 1.500h4v3h-4z" fill="#58a84a" />
          <path d="M1 8h20v10H1z" fill="#fbe795" />
          <path d="M5 20v-6.500q0-1.500 1.500-1.500h9q1.500 0 1.500 1.500V20h-3v-5H8v5z" fill="#a9d4ee" stroke="#5f9cc4" strokeWidth=".6" />
        </svg>
      </button>
      <button type="button" aria-label="Command prompt" className="flex w-[42px] items-center justify-center">
        <svg viewBox="0 0 20 17" className="h-[17px] w-5">
          <rect x=".5" y=".5" width="19" height="16" fill="#050505" stroke="#9a9a9a" />
          <rect x="1" y="1" width="18" height="1.500" fill="#c8c8c8" />
          <path d="M4.500 5H2.500v3h2M6 5.500v.5M6 7.500v.5M7.500 5l1.500 3M11 8.200h5" stroke="#e8e8e8" strokeWidth=".9" fill="none" />
        </svg>
      </button>
      <button type="button" aria-label="Snipping tool" className="flex w-[41px] items-center justify-center">
        <svg viewBox="0 0 22 20" className="h-5 w-[22px]" fill="none">
          <ellipse cx="9" cy="7" rx="7.500" ry="5.500" fill="#f4f4f8" stroke="#d03a44" strokeWidth="1.500" transform="rotate(-15 9 7)" />
          <path d="M8 1 13 14M4 9.500 16 12" stroke="#8a94a8" strokeWidth="1.400" />
          <circle cx="13.500" cy="16.500" r="2.300" stroke="#33568c" strokeWidth="1.500" />
          <circle cx="18.500" cy="12.500" r="2.300" stroke="#33568c" strokeWidth="1.500" />
        </svg>
      </button>
      <button type="button" aria-label="Skyline" className="flex w-[43px] items-center justify-center">
        <SkylineLogo pale />
      </button>
      <button type="button" aria-label="Skyline-daily" className="flex w-[39px] items-center justify-center rounded-[2px] border border-[#e2f1fb] bg-linear-to-br from-[#d5e8f5] to-[#8dc0e2]">
        <SkylineLogo />
      </button>
      <button type="button" aria-label="TeamViewer" className="ml-[3px] flex w-10 items-center justify-center rounded-[2px] border border-[#8fc4e6] bg-[#5aa6da]">
        <svg viewBox="0 0 20 20" className="size-5">
          <rect width="20" height="20" rx="2" fill="#0d7ae0" />
          <circle cx="10" cy="10" r="8.300" fill="#fff" />
          <path d="M2.500 10 6.500 6.500v2.300h7V6.500l4 3.500-4 3.500v-2.300h-7v2.300z" fill="#0d6fd0" />
        </svg>
      </button>
      <div className="ml-auto flex items-center">
        <svg viewBox="0 0 6 4" className="h-1 w-[6px]">
          <path d="M.5 3.500 3 .8l2.500 2.700z" fill="#fff" />
        </svg>
        <svg viewBox="0 0 12 11" className="ml-2 h-[11px] w-3">
          <path d="M2 1v10" stroke="#fff" strokeWidth="1.300" />
          <path d="M3 1.500q2-1 4 0t4 0v5q-2 1-4 0t-4 0z" fill="#e8eef6" />
          <rect x="5.500" y="4.500" width="6" height="6" fill="#e02b20" />
          <path d="M7 6l3 3M10 6 7 9" stroke="#fff" />
        </svg>
        <svg viewBox="0 0 12 11" className="ml-1 h-[11px] w-3" fill="none" stroke="#fff">
          <path d="M3.500 2.500h7v6h-7zM5 10h5M1 .5v3h2M3 .5v3" />
        </svg>
        <svg viewBox="0 0 12 11" className="ml-1 h-[11px] w-3">
          <path d="M.5 3.800h2L5.500 1v9L2.500 7.200h-2z" fill="#fff" />
          <path d="M7 3.500q1.500 2 0 4M9 2.200q2.300 3.300 0 6.600" stroke="#e6eef8" fill="none" />
        </svg>
        <div className="ml-2 text-center text-[8px] leading-[11px]">
          <div>4:11 PM</div>
          <div>8/31/2017</div>
        </div>
        <button type="button" aria-label="Show desktop" className="ml-[7px] h-full w-2 border-l border-[#0a2c58] bg-[#3a6ca6]" />
      </div>
    </footer>
  );
}

export default function App() {
  return (
    <div className="flex h-screen flex-col overflow-hidden bg-[#f4f4f4] font-['Open_Sans','Noto_Sans',sans-serif] text-[#1a1a1a]">
      <TitleBar />
      <nav className="flex h-[17px] shrink-0 items-center bg-[#f6f6f6] pl-[10px] text-[8px] leading-[14px]">
        {["File", "Edit", "View", "Settings", "Tools", "Help"].map((item) => (
          <button key={item} type="button" className="mr-3">
            {item}
          </button>
        ))}
      </nav>
      <Toolbar />
      <main className="grid min-h-0 flex-1 grid-cols-[311px_minmax(0,1fr)_278px] gap-x-[3px]">
        <TargetsPanel />
        <GraphArea />
        <div className="flex min-h-0 flex-col gap-[3px]">
          <section className="flex min-h-0 flex-1 flex-col border-b border-l border-[#b4b4b4] bg-white">
            <PanelHeader title="Retention Times - Replicate Comparison" />
            <div className="min-h-0 flex-1">
              <RetentionTimesChart />
            </div>
          </section>
          <section className="flex min-h-0 flex-1 flex-col border-l border-[#b4b4b4] bg-white">
            <PanelHeader title="Peak Areas - Replicate Comparison" />
            <div className="min-h-0 flex-1">
              <PeakAreasChart />
            </div>
          </section>
        </div>
      </main>
      <div className="flex h-[15px] shrink-0 items-center border-t border-[#9fa8ae] bg-[#f0eded] pl-[3px] pr-3 text-[8px] leading-[12px]">
        <span className="flex-1">Ready</span>
        <div className="flex gap-1">
          <span>3/18 prot</span>
          <span>8/51 pep</span>
          <span>8/51 prec</span>
          <span>23/172 tran</span>
        </div>
      </div>
      <Taskbar />
    </div>
  );
}
